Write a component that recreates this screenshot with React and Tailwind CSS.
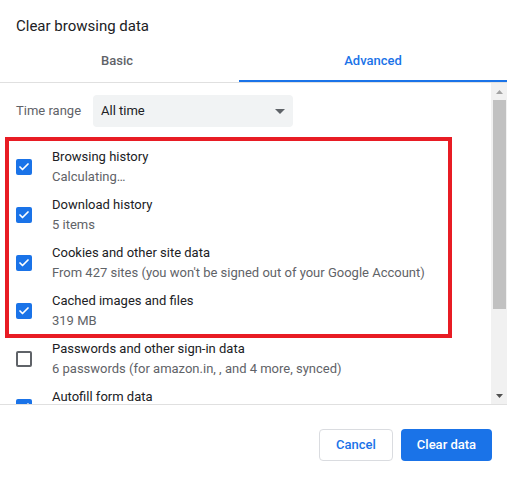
import { Check } from "lucide-react";

const rows = [
  { label: "Browsing history", sub: "Calculating…", checked: true },
  { label: "Download history", sub: "5 items", checked: true },
  {
    label: "Cookies and other site data",
    sub: "From 427 sites (you won't be signed out of your Google Account)",
    checked: true,
  },
  { label: "Cached images and files", sub: "319 MB", checked: true },
  {
    label: "Passwords and other sign-in data",
    sub: "6 passwords (for amazon.in, , and 4 more, synced)",
    checked: false,
  },
  { label: "Autofill form data", sub: "\u00a0", checked: true },
];

function Checkbox({ checked }) {
  if (checked) {
    return (
      <div className="w-4 h-4 rounded-[2px] bg-[#1a73e8] flex items-center justify-center shrink-0">
        <Check size={12} strokeWidth={3.5} className="text-white" />
      </div>
    );
  }
  return (
    <div className="w-4 h-4 rounded-[2px] border-2 border-[#5f6368] shrink-0" />
  );
}

function App() {
  return (
    <div
      className="w-[507px] h-[479px] bg-white flex flex-col overflow-hidden text-[#202124]"
      style={{ fontFamily: "Roboto, 'Liberation Sans', sans-serif" }}
    >
      {/* Title */}
      <div className="h-[42px] pl-4 pt-[16px] text-[15px] leading-[20px]">
        Clear browsing data
      </div>

      {/* Tabs */}
      <div className="flex border-b border-[#e0e0e0] text-[13px] font-medium">
        <div className="w-[234px] h-[40px] flex items-center justify-center text-[#5f6368] pb-[2px]">
          Basic
        </div>
        <div className="flex-1 h-[40px] flex items-center justify-center text-[#1a73e8] border-b-2 border-[#1a73e8] ml-[5px]">
          Advanced
        </div>
      </div>

      {/* Scroll area */}
      <div className="flex h-[322px] border-b border-[#e0e0e0]">
        <div className="relative flex-1 overflow-hidden">
          <div className="flex items-center pt-3 pl-4">
            <span className="text-[13px] text-[#5f6368] w-[77px]">Time range</span>
            <div className="w-[200px] h-[32px] rounded-[4px] bg-[#f1f3f4] flex items-center justify-between pl-2 pr-[8px]">
              <span className="text-[13px]">All time</span>
              <svg width="10" height="5" viewBox="0 0 10 5">
                <path d="M0 0 L10 0 L5 5 Z" fill="#5f6368" />
              </svg>
            </div>
          </div>

          <div className="mt-4">
            {rows.map((r) => (
              <div key={r.label} className="h-12 flex items-center pl-4">
                <Checkbox checked={r.checked} />
                <div className="ml-5 flex flex-col text-[13px] leading-[20px]">
                  <span>{r.label}</span>
                  <span className="text-[#5f6368]">{r.sub}</span>
                </div>
              </div>
            ))}
          </div>

          {/* red annotation */}
          <div className="absolute left-[5px] top-[54px] w-[447px] h-[201px] border-4 border-[#e81c24] pointer-events-none" />
        </div>

        {/* Scrollbar */}
        <div className="w-[16px] bg-[#f1f1f1] flex flex-col items-center">
          <div className="h-[17px] flex items-center justify-center">
            <svg width="7" height="4" viewBox="0 0 7 4">
              <path d="M0 4 L7 4 L3.5 0 Z" fill="#a3a3a3" />
            </svg>
          </div>
          <div className="w-[13px] ml-[1px] h-[209px] bg-[#c1c1c1]" />
          <div className="flex-1" />
          <div className="h-[17px] flex items-center justify-center">
            <svg width="7" height="4" viewBox="0 0 7 4">
              <path d="M0 0 L7 0 L3.5 4 Z" fill="#505050" />
            </svg>
          </div>
        </div>
      </div>

      {/* Footer */}
      <div className="flex justify-end gap-2 pt-[24px] pr-[15px]">
        <button className="w-[74px] h-[32px] rounded-[4px] border border-[#dadce0] text-[13px] font-medium text-[#1a73e8] bg-white">
          Cancel
        </button>
        <button className="w-[91px] h-[32px] rounded-[4px] bg-[#1a73e8] text-[13px] font-medium text-white">
          Clear data
        </button>
      </div>
    </div>
  );
}

export default App;
